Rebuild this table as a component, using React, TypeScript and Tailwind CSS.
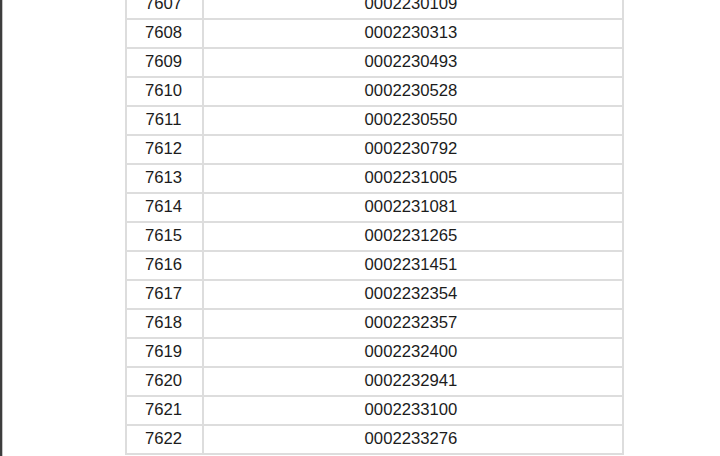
const ROWS: [string, string][] = [
  ['7607', '0002230109'],
  ['7608', '0002230313'],
  ['7609', '0002230493'],
  ['7610', '0002230528'],
  ['7611', '0002230550'],
  ['7612', '0002230792'],
  ['7613', '0002231005'],
  ['7614', '0002231081'],
  ['7615', '0002231265'],
  ['7616', '0002231451'],
  ['7617', '0002232354'],
  ['7618', '0002232357'],
  ['7619', '0002232400'],
  ['7620', '0002232941'],
  ['7621', '0002233100'],
  ['7622', '0002233276'],
]

export default function App() {
  return (
    <div className="flex h-[456px] w-[720px] overflow-hidden bg-white font-['Liberation_Sans',Arial,sans-serif] text-[16.7px] text-[#1c1c1c]">
      {/* viewer edge */}
      <div className="w-[2px] shrink-0 bg-[#3d3d3d]" />
      <div className="w-px shrink-0 bg-[#c4c4c4]" />

      <div className="flex-1 pl-[122px]">
        <div className="-mt-[9px] w-[499px] border-x-2 border-[#dddddd]">
          {ROWS.map(([no, code]) => (
            <div
              key={no}
              className="grid h-[29px] grid-cols-[77px_1fr] border-b-2 border-[#dddddd]"
            >
              <div className="flex items-center justify-center border-r-2 border-[#dddddd] pr-[2px] leading-none">
                {no}
              </div>
              <div className="flex items-center justify-center pr-[4px] leading-none">{code}</div>
            </div>
          ))}
        </div>
      </div>
    </div>
  )
}
